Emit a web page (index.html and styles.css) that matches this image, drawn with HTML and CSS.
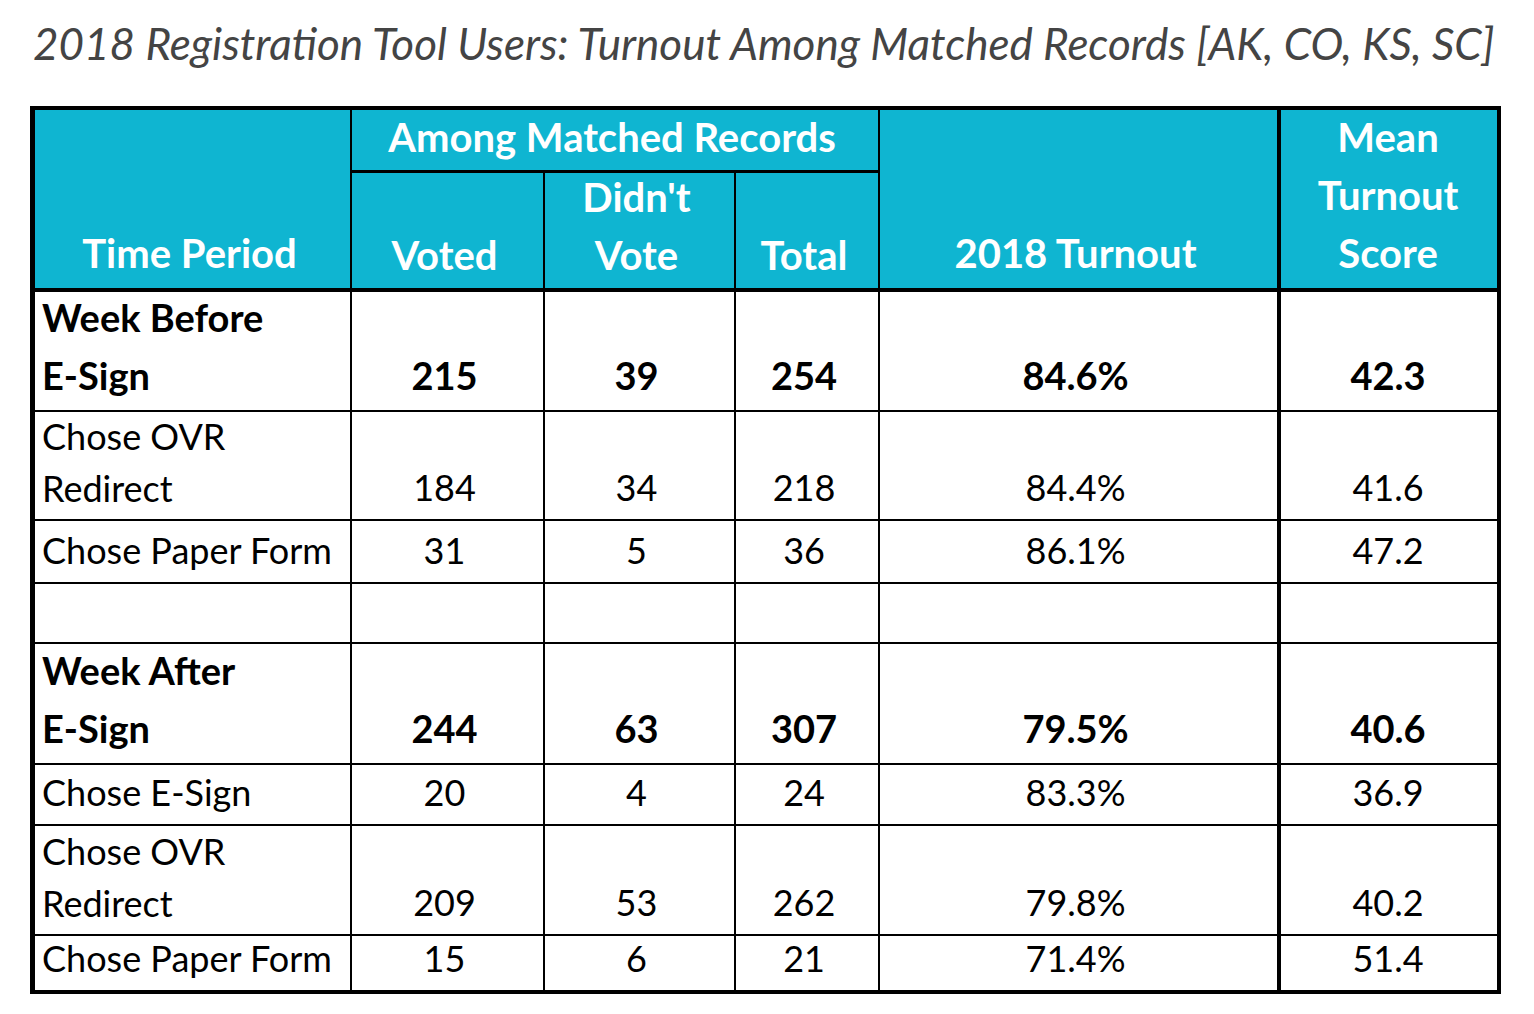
FILE: index.html
```html
<!DOCTYPE html>
<html lang="en">
<head>
<meta charset="utf-8">
<title>2018 Registration Tool Users</title>
<link rel="stylesheet" href="styles.css">
</head>
<body>
<h1 class="title">2018 Registration Tool Users: Turnout Among Matched Records [AK, CO, KS, SC]</h1>
<table class="grid">
  <colgroup>
    <col class="c1"><col class="c2"><col class="c3"><col class="c4"><col class="c5"><col class="c6">
  </colgroup>
  <thead>
    <tr class="h-top">
      <th rowspan="2" class="hd hd-span">Time Period</th>
      <th colspan="3" class="hd hd-group">Among Matched Records</th>
      <th rowspan="2" class="hd hd-span hd-turn">2018 Turnout</th>
      <th rowspan="2" class="hd hd-multi hd-last"><span class="stack">Mean<br>Turnout<br>Score</span></th>
    </tr>
    <tr class="h-sub">
      <th class="hd hd-sub">Voted</th>
      <th class="hd hd-sub hd-sub2"><span class="stack">Didn't<br>Vote</span></th>
      <th class="hd hd-sub">Total</th>
    </tr>
  </thead>
  <tbody>
    <tr class="group g1">
      <td><span class="stack">Week Before<br>E-Sign</span></td><td>215</td><td>39</td><td>254</td><td>84.6%</td><td>42.3</td>
    </tr>
    <tr class="two t1">
      <td><span class="stack">Chose OVR<br>Redirect</span></td><td>184</td><td>34</td><td>218</td><td>84.4%</td><td>41.6</td>
    </tr>
    <tr class="one o1">
      <td>Chose Paper Form</td><td>31</td><td>5</td><td>36</td><td>86.1%</td><td>47.2</td>
    </tr>
    <tr class="spacer">
      <td></td><td></td><td></td><td></td><td></td><td></td>
    </tr>
    <tr class="group g2">
      <td><span class="stack">Week After<br>E-Sign</span></td><td>244</td><td>63</td><td>307</td><td>79.5%</td><td>40.6</td>
    </tr>
    <tr class="one o2">
      <td>Chose E-Sign</td><td>20</td><td>4</td><td>24</td><td>83.3%</td><td>36.9</td>
    </tr>
    <tr class="two t2">
      <td><span class="stack">Chose OVR<br>Redirect</span></td><td>209</td><td>53</td><td>262</td><td>79.8%</td><td>40.2</td>
    </tr>
    <tr class="one o3">
      <td>Chose Paper Form</td><td>15</td><td>6</td><td>21</td><td>71.4%</td><td>51.4</td>
    </tr>
  </tbody>
</table>
</body>
</html>
```

FILE: styles.css
```css
* { box-sizing: border-box; }

html, body {
  margin: 0;
  padding: 0;
  background: #ffffff;
}

body {
  width: 1534px;
  height: 1014px;
  overflow: hidden;
  font-family: Lato, "Open Sans", "Liberation Sans", sans-serif;
  color: #000;
}

.title {
  margin: 0;
  height: 106px;
  padding: 17px 0 0 33px;
  font-size: 44px;
  line-height: 52px;
  font-weight: 400;
  font-style: italic;
  color: #444444;
  white-space: nowrap;
}

.grid {
  margin-left: 30px;
  width: 1471px;
  table-layout: fixed;
  border-collapse: separate;
  border-spacing: 0;
  border: 4px solid #000;
  border-left-width: 5px;
}

.c1 { width: 317px; }
.c2 { width: 193px; }
.c3 { width: 191px; }
.c4 { width: 144px; }
.c5 { width: 401px; }
.c6 { width: 216px; }

.grid th,
.grid td {
  padding: 0 6px 10px 0;
  border-right: 2px solid #000;
  border-bottom: 2px solid #000;
  vertical-align: bottom;
  text-align: center;
  white-space: nowrap;
}

.stack {
  display: block;
  margin-top: -6px;
}

/* header */
.grid .hd {
  background: #0fb5d1;
  color: #ffffff;
  font-weight: 700;
  font-size: 40px;
  line-height: 48px;
}

.h-top { height: 63px; }
.h-sub { height: 119px; }

.grid .hd-group {
  line-height: 46px;
  padding-bottom: 10.5px;
  border-bottom-width: 3px;
}

.grid .hd-sub {
  line-height: 48px;
  padding-bottom: 9px;
  border-bottom-width: 4px;
}

.grid .hd-sub2 {
  line-height: 58px;
  padding-bottom: 4px;
}

.grid .hd-span {
  line-height: 48px;
  padding-bottom: 11.5px;
  border-bottom-width: 4px;
}

.grid .hd-multi {
  line-height: 58px;
  padding-bottom: 6.5px;
  border-bottom-width: 4px;
}

.grid .hd-turn { border-right-width: 4px; }
.grid .hd-last { border-right: 0; padding-right: 2px; }

/* body */
.grid td {
  font-size: 36px;
  line-height: 44px;
  font-weight: 400;
}

.grid td:first-child {
  text-align: left;
  padding-left: 7px;
}

.grid td:nth-child(5) { border-right-width: 4px; }
.grid td:last-child { border-right: 0; padding-right: 2px; }
.grid tr:last-child td { border-bottom: 0; }

.grid .group td {
  font-weight: 700;
  font-size: 38px;
  padding-bottom: 12.7px;
}

.grid .group td:first-child {
  line-height: 58px;
  padding-bottom: 5.7px;
}

.grid .two td:first-child {
  line-height: 52.5px;
  padding-bottom: 4.2px;
}

.g1 { height: 120px; }
.t1 { height: 109px; }
.o1 { height: 63px; }
.spacer { height: 60px; }
.g2 { height: 121px; }
.o2 { height: 61px; }
.t2 { height: 110px; }
.o3 { height: 54px; }
```
